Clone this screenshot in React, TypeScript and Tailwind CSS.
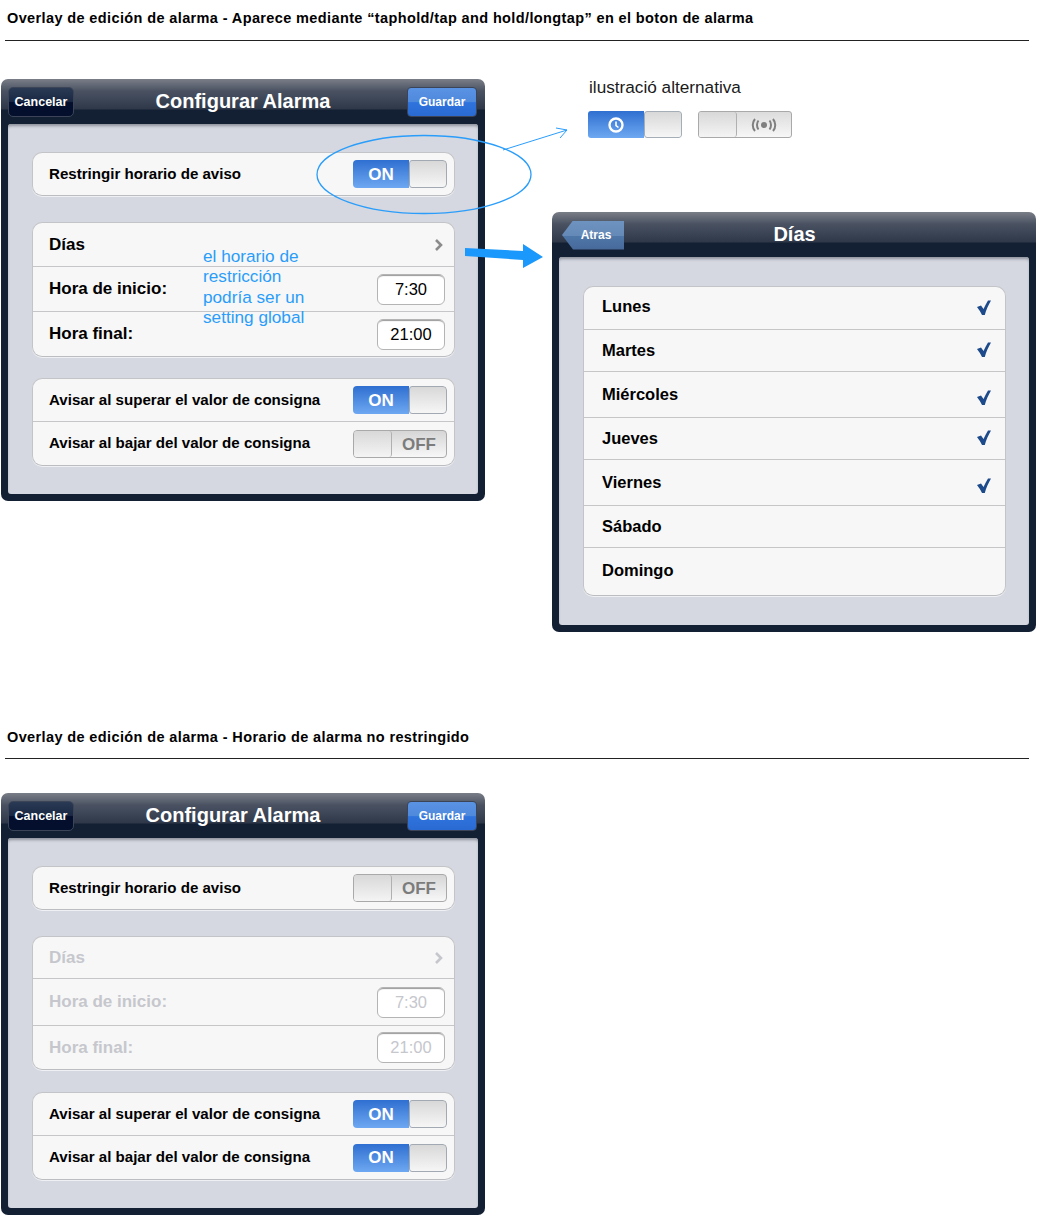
import type { ReactNode } from "react";

const FONT = "font-['Liberation_Sans',Arial,sans-serif]";

/** Section heading with the rule under it */
function SectionTitle({ children, className }: { children: ReactNode; className: string }) {
  return (
    <div className={`mx-[5px] flex h-[41px] w-[1024px] items-center border-b border-[#222] pl-[2px] ${className}`}>
      <span className="text-[14.5px] font-bold leading-none tracking-[0.38px] text-black">{children}</span>
    </div>
  );
}

function CancelButton() {
  return (
    <div className="flex h-[30px] w-[66px] items-center justify-center rounded-[5px] border border-[#3b4557] bg-[linear-gradient(#2a3a55_0%,#1a2843_48%,#030f2c_52%,#030f2c_100%)] pt-[1px] text-[12.5px] font-bold text-white">
      Cancelar
    </div>
  );
}

function SaveButton() {
  return (
    <div className="mr-[1px] flex h-[30px] w-[70px] items-center justify-center rounded-[4px] border border-[#3b4557] bg-[linear-gradient(#5a93e4_0%,#4f89dc_50%,#2f73dd_52%,#2a6ad2_100%)] pt-[1px] text-[12px] font-bold text-white">
      Guardar
    </div>
  );
}

function BackButton() {
  return (
    <div className="ml-[3px] mt-[1px] flex h-[29px] w-[62px] items-center justify-center bg-[linear-gradient(#6f93c0_0%,#658ab8_50%,#4e77a8_52%,#47699a_100%)] pl-[6px] text-[12px] font-bold text-white [clip-path:polygon(11px_0,100%_0,100%_100%,11px_100%,0_50%)]">
      Atras
    </div>
  );
}

/** Navigation-bar window used for all three overlays */
function Panel({ title, left, right, titleClass, className, children }: {
  title: string;
  left: ReactNode;
  right?: ReactNode;
  titleClass: string;
  className: string;
  children: ReactNode;
}) {
  return (
    <div className={`w-[484px] shrink-0 rounded-[7px] bg-[linear-gradient(#7a7e87_0px,#4a5262_12px,#2e3849_30px,#131f33_31px,#131f33_100%)] px-[7px] pb-[7px] ${className}`}>
      <div className="flex h-[45px] items-center">
        {left}
        <div className={`flex-1 pb-[2px] text-center text-[20px] font-bold text-white ${titleClass}`}>{title}</div>
        {right}
      </div>
      {children}
    </div>
  );
}

function Body({ className, children }: { className: string; children: ReactNode }) {
  return (
    <div className={`flex flex-col rounded-[3px] bg-[#d5d8e0] pl-[24px] pr-[23px] shadow-[inset_0_3px_3px_-1px_#8e929c] ${className}`}>
      {children}
    </div>
  );
}

function Group({ className, children }: { className: string; children: ReactNode }) {
  return (
    <div className={`overflow-hidden rounded-[10px] border border-[#c3c4c7] border-b-[#bcbdc0] bg-[#f7f7f7] shadow-[0_1px_0_#eef0f4] ${className}`}>
      {children}
    </div>
  );
}

function Row({ label, className, labelClass, children }: {
  label: string;
  className: string;
  labelClass: string;
  children?: ReactNode;
}) {
  return (
    <div className={`flex items-center justify-between border-b border-[#c6c6c8] pl-[16px] pr-[7px] last:border-b-0 ${className}`}>
      <span className={`font-bold ${labelClass}`}>{label}</span>
      {children}
    </div>
  );
}

function Toggle({ on }: { on: boolean }) {
  return on ? (
    <div className="flex h-[28px] w-[94px] overflow-hidden rounded-[4px]">
      <div className="flex w-[56px] items-center justify-center bg-[linear-gradient(#2f6fd0,#6ea8f2)] pt-[1px] text-[17px] font-bold text-white">ON</div>
      <div className="flex-1 rounded-l-[3px] rounded-r-[4px] border border-[#a3a9b2] bg-[linear-gradient(#d8d8d8,#f6f6f6)]" />
    </div>
  ) : (
    <div className="flex h-[28px] w-[94px] overflow-hidden rounded-[4px] border border-[#a9a9a9] bg-[linear-gradient(#d6d6d6,#f7f7f7)]">
      <div className="w-[38px] rounded-r-[3px] border-r border-[#b0b0b0] bg-[linear-gradient(#d8d8d8,#f4f4f4)]" />
      <div className="flex flex-1 items-center justify-center pt-[2px] text-[17px] font-bold text-[#7c7c7c]">OFF</div>
    </div>
  );
}

function TimeField({ value, muted }: { value: string; muted?: boolean }) {
  return (
    <div className={`mr-[2px] flex h-[31px] w-[68px] items-center justify-center rounded-[6px] border border-[#b4b4b4] bg-white text-[16.5px] shadow-[inset_0_2px_1px_-1px_#999] ${muted ? "text-[#c6c7cd]" : "text-black"}`}>
      {value}
    </div>
  );
}

function Chevron({ color }: { color: string }) {
  return (
    <svg width="10" height="14" viewBox="0 0 10 14" className="mr-[3px]">
      <path d="M2 2l5 5-5 5" fill="none" stroke={color} strokeWidth="2.6" />
    </svg>
  );
}

function Check({ className }: { className: string }) {
  return (
    <svg width="14" height="15" viewBox="0 0 14 15" className={`mr-[7px] ${className}`}>
      <path d="M0 7L4 5.5L6.5 9C8 6 9.5 3 11 0.5L14 0.5C11.5 5 9 10 7.8 15L5 15C3.5 12 2 9.5 0 7Z" fill="#1c4a8a" />
    </svg>
  );
}

const TOGGLE_LABEL = "text-[15.1px] text-black";
const FIELD_LABEL = "text-[17px] text-black";
const FIELD_LABEL_OFF = "text-[17px] text-[#c6c7cd]";

const DAYS = [
  { name: "Lunes", checkCls: "mt-[2px]", cls: "h-[43px] pb-[3px]" },
  { name: "Martes", checkCls: "mb-[2px]", cls: "h-[42px]" },
  { name: "Miércoles", checkCls: "mt-[5px]", cls: "h-[46px]" },
  { name: "Jueves", checkCls: "mb-[2px]", cls: "h-[42px]" },
  { name: "Viernes", checkCls: "mt-[5px]", cls: "h-[46px]" },
  { name: "Sábado", checkCls: "", cls: "h-[42px]" },
  { name: "Domingo", checkCls: "", cls: "h-[47px] pb-[2px]" },
];

export default function App() {
  return (
    <div className={`relative h-[1219px] w-[1037px] overflow-hidden bg-white ${FONT}`}>
      <SectionTitle className="pb-[4px]">
        Overlay de edición de alarma - Aparece mediante “taphold/tap and hold/longtap” en el boton de alarma
      </SectionTitle>

      <div className="mt-[38px] flex h-[553px] items-start pl-[1px]">
        <Panel title="Configurar Alarma" left={<CancelButton />} right={<SaveButton />} titleClass="pl-[5px]" className="h-[422px]">
          <Body className="pb-[28px] pt-[28px]">
            <Group className="">
              <Row label="Restringir horario de aviso" className="h-[42px]" labelClass={TOGGLE_LABEL}>
                <Toggle on />
              </Row>
            </Group>
            <Group className="mt-[26px]">
              <Row label="Días" className="h-[44px]" labelClass={FIELD_LABEL}>
                <Chevron color="#8c8c8c" />
              </Row>
              <Row label="Hora de inicio:" className="h-[45px]" labelClass={FIELD_LABEL}>
                <TimeField value="7:30" />
              </Row>
              <Row label="Hora final:" className="h-[44px]" labelClass={FIELD_LABEL}>
                <TimeField value="21:00" />
              </Row>
            </Group>
            <Group className="mt-[21px]">
              <Row label="Avisar al superar el valor de consigna" className="h-[43px]" labelClass={TOGGLE_LABEL}>
                <Toggle on />
              </Row>
              <Row label="Avisar al bajar del valor de consigna" className="h-[43px]" labelClass={TOGGLE_LABEL}>
                <Toggle on={false} />
              </Row>
            </Group>
          </Body>
        </Panel>

        <div className="ml-[67px] flex flex-col">
          <div className="pl-[37px] text-[17.2px] leading-[16px] text-[#1a1a1a]">ilustració alternativa</div>
          <div className="mt-[16px] flex gap-[16px] pl-[36px]">
            <div className="flex h-[27px] w-[94px] overflow-hidden rounded-[3px]">
              <div className="flex w-[56px] items-center justify-center bg-[linear-gradient(#2f6fd0,#6ea8f2)]">
                <svg width="16" height="16" viewBox="0 0 16 16">
                  <circle cx="8" cy="8" r="6.5" fill="none" stroke="#fff" strokeWidth="2.4" />
                  <path d="M8 4.5V8.5L10.5 10.5" fill="none" stroke="#fff" strokeWidth="1.6" />
                </svg>
              </div>
              <div className="flex-1 rounded-l-[3px] rounded-r-[3px] border border-[#a5adb7] bg-[linear-gradient(#d8d8d8,#f6f6f6)]" />
            </div>
            <div className="flex h-[27px] w-[94px] overflow-hidden rounded-[3px] border border-[#a9a9a9] bg-[linear-gradient(#dcdcdc,#f7f7f7)]">
              <div className="w-[38px] rounded-r-[3px] border-r border-[#b0b0b0] bg-[linear-gradient(#d8d8d8,#f4f4f4)]" />
              <div className="flex flex-1 items-center justify-center">
                <svg width="28" height="14" viewBox="0 0 28 14">
                  <circle cx="14" cy="7" r="3" fill="#7f7f7f" />
                  <path d="M8.5 2.5C6.5 5 6.5 9 8.5 11.5M19.5 2.5C21.5 5 21.5 9 19.5 11.5M5 1C2 4.5 2 9.5 5 13M23 1C26 4.5 26 9.5 23 13" fill="none" stroke="#7f7f7f" strokeWidth="2" />
                </svg>
              </div>
            </div>
          </div>

          <Panel title="Días" left={<BackButton />} right={<div className="w-[64px]" />} titleClass="" className="mt-[74px] h-[420px]">
            <Body className="pb-[29px] pt-[29px]">
              <Group className="">
                {DAYS.map((day, i) => (
                  <Row key={day.name} label={day.name} className={day.cls} labelClass="ml-[2px] text-[16.5px] text-black">
                    {i < 5 && <Check className={day.checkCls} />}
                  </Row>
                ))}
              </Group>
            </Body>
          </Panel>
        </div>
      </div>

      <SectionTitle className="mt-[86px] pb-[2px]">Overlay de edición de alarma - Horario de alarma no restringido</SectionTitle>

      <div className="mt-[34px] pl-[1px]">
        <Panel title="Configurar Alarma" left={<CancelButton />} right={<SaveButton />} titleClass="pr-[15px]" className="h-[422px]">
          <Body className="pb-[28px] pt-[28px]">
            <Group className="">
              <Row label="Restringir horario de aviso" className="h-[42px]" labelClass={TOGGLE_LABEL}>
                <Toggle on={false} />
              </Row>
            </Group>
            <Group className="mt-[26px]">
              <Row label="Días" className="h-[42px]" labelClass={FIELD_LABEL_OFF}>
                <Chevron color="#c6c7cd" />
              </Row>
              <Row label="Hora de inicio:" className="h-[47px]" labelClass={FIELD_LABEL_OFF}>
                <TimeField value="7:30" muted />
              </Row>
              <Row label="Hora final:" className="h-[43px]" labelClass={FIELD_LABEL_OFF}>
                <TimeField value="21:00" muted />
              </Row>
            </Group>
            <Group className="mt-[22px]">
              <Row label="Avisar al superar el valor de consigna" className="h-[43px]" labelClass={TOGGLE_LABEL}>
                <Toggle on />
              </Row>
              <Row label="Avisar al bajar del valor de consigna" className="h-[43px]" labelClass={TOGGLE_LABEL}>
                <Toggle on />
              </Row>
            </Group>
          </Body>
        </Panel>
      </div>

      {/* annotations drawn over the wireframe */}
      <svg width="1037" height="300" className="pointer-events-none absolute left-0 top-0">
        <ellipse cx="424" cy="174.5" rx="107" ry="39" fill="none" stroke="#2a9dfa" strokeWidth="1.3" />
        <path d="M503 150L567 130M556 128L567 130L560 138" fill="none" stroke="#2a9dfa" strokeWidth="1" />
        <path d="M465 248L523 251V244L543 257L523 268V260L465 256Z" fill="#1a98fb" />
      </svg>
      <div className="absolute left-[203px] top-[246px] w-[112px] text-[17.2px] leading-[20.4px] text-[#2a9dfa]">
        el horario de restricción podría ser un setting global
      </div>
    </div>
  );
}
